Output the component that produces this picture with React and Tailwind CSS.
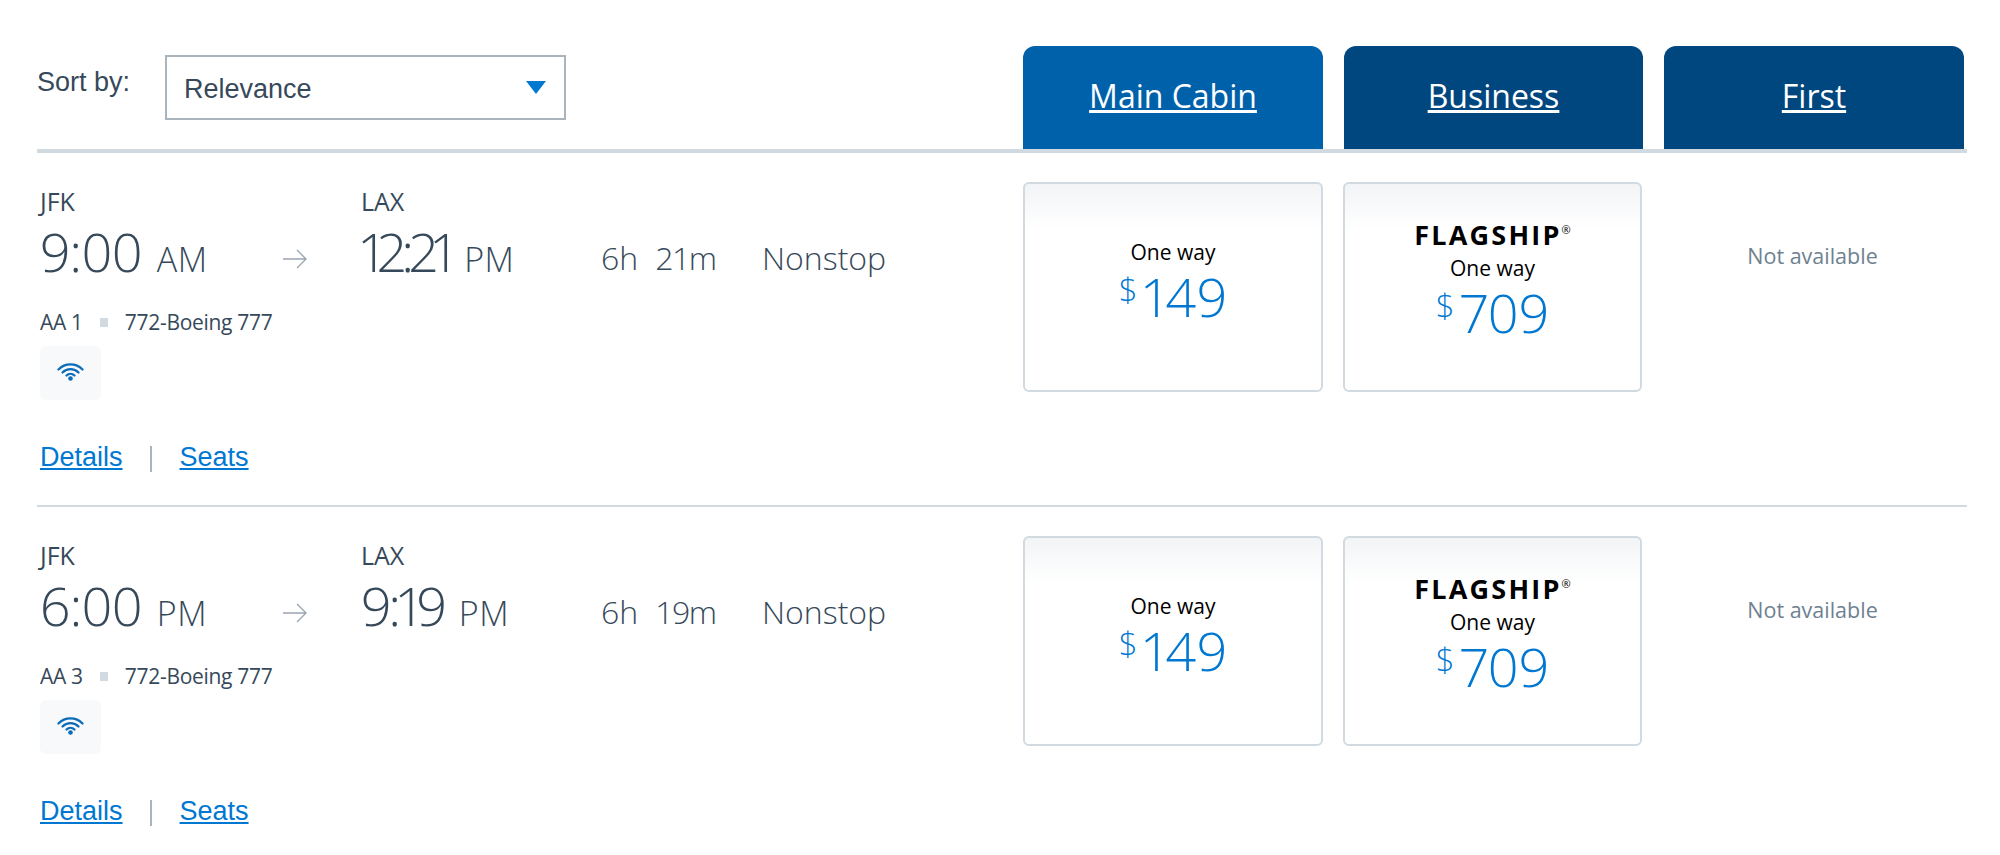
import React from 'react';

const flights = [
  { dep: '9:00', depAp: 'AM', arr: '12:21', arrAp: 'PM', arrTrack: 'tracking-[-5px]', h: '6h', m: '21m', no: 'AA 1' },
  { dep: '6:00', depAp: 'PM', arr: '9:19', arrAp: 'PM', arrTrack: 'tracking-[-3px]', h: '6h', m: '19m', no: 'AA 3' },
];

const sans = 'font-["Open_Sans",sans-serif]';
const arial = 'font-["Liberation_Sans",Arial,sans-serif]';

const Wifi = () => (
  <svg width="27" height="19" viewBox="0 0 27 19" fill="none" stroke="#0b6cb8" strokeWidth="2.3" strokeLinecap="round">
    <path d="M1.5 7.5C8 .7 19 .7 25.5 7.5" />
    <path d="M5.5 10.5C10 6 17 6 21.5 10.5" />
    <path d="M9.5 13.5C11.8 11.3 15.2 11.3 17.5 13.5" />
    <circle cx="13.5" cy="16.5" r="2.3" fill="#0b6cb8" stroke="none" />
  </svg>
);

const Time = ({ code, time, ap, track = 'tracking-[-1px]' }) => (
  <div>
    <div className="text-[25px] leading-[30px] text-[#36495a] -mt-[1px]">{code}</div>
    <div className="mt-[5px] h-[60px] flex items-baseline font-light text-[#36495a] leading-[60px]">
      <span className={`text-[54px] proportional-nums ${track}`}>{time}</span>
      <span className="text-[34px] ml-[15px] tracking-[0.5px]">{ap}</span>
    </div>
  </div>
);

const FareCard = ({ price, flagship, wide }) => (
  <div className={`h-[210px] border-2 border-[#d0dae0] rounded-md bg-gradient-to-b from-[#f2f4f6] to-white to-[22%] flex flex-col items-center ${wide ? 'w-[300px]' : 'w-[299px]'} ${flagship ? 'pt-[36px]' : 'pt-[53px]'}`}>
    {flagship && (
      <div className="h-[33px] flex items-start text-black font-bold text-[27px] leading-[30px] tracking-[2.2px]">
        FLAGSHIP<span className="text-[11px] leading-[20px] font-normal tracking-normal">®</span>
      </div>
    )}
    <div className="text-[21px] leading-[30px] text-black">One way</div>
    <div className="flex items-start text-[#0078d2] font-light mt-[2px]">
      <span className="text-[33px] leading-[42px] mr-[6px]">$</span>
      <span className="text-[54px] leading-[54px] proportional-nums">{price}</span>
    </div>
  </div>
);

const FlightRow = ({ f, last }) => (
  <div className={`flex h-[354px] ${last ? '' : 'border-b-2 border-[#d0dae0]'}`}>
    <div className="w-[986px] pl-[3px] pt-[34px]">
      <div className="flex items-start">
        <div className="w-[240px]"><Time code="JFK" time={f.dep} ap={f.depAp} /></div>
        <div className="w-[81px] pl-[2px] pt-[60px]">
          <svg width="26" height="24" viewBox="0 0 26 24" fill="none" stroke="#9aa7b1" strokeWidth="1.4">
            <path d="M1 12H24M15 3l9 9-9 9" />
          </svg>
        </div>
        <div className="w-[240px]"><Time code="LAX" time={f.arr} ap={f.arrAp} track={f.arrTrack} /></div>
        <div className="w-[161px] pt-[41px] text-[32px] leading-[60px] font-light text-[#36495a] flex">
          <span>{f.h}</span>
          <span className="ml-[17px] tracking-[-1.5px]">{f.m}</span>
        </div>
        <div className="pt-[41px] text-[32px] leading-[60px] font-light text-[#36495a]">Nonstop</div>
      </div>
      <div className="mt-[18px] flex items-center text-[21px] leading-[32px] tracking-[-0.3px] text-[#36495a]">
        <span>{f.no}</span>
        <span className="w-[8px] h-[9px] bg-[#d0dae0] mx-[17px]"></span>
        <span>772-Boeing 777</span>
      </div>
      <div className="mt-[8px] w-[61px] h-[54px] rounded-md bg-[#f7f9fa] flex justify-center pt-[16px]">
        <Wifi />
      </div>
      <div className={`mt-[41px] flex items-center text-[27px] leading-[32px] text-[#0078d2] ${arial}`}>
        <a className="underline" href="#details">Details</a>
        <span className="w-[2px] h-[26px] bg-[#a9b4bc] ml-[27px] mr-[28px] mt-[4px]"></span>
        <a className="underline" href="#seats">Seats</a>
      </div>
    </div>
    <div className="pt-[29px] flex gap-[20px] items-start">
      <FareCard price="149" wide />
      <FareCard price="709" flagship />
      <div className="w-[300px] pt-[59px] pl-[1px] text-center text-[21.5px] leading-[30px] text-[#6e8190]">Not available</div>
    </div>
  </div>
);

export default function App() {
  return (
    <div className={`w-[2000px] h-[855px] overflow-hidden bg-white pl-[37px] ${sans}`}>
      <div className="w-[1930px] h-[153px] border-b-4 border-[#d0dae0] flex">
        <div className={`w-[986px] flex items-start pt-[55px] ${arial}`}>
          <div className="w-[128px] text-[27px] leading-[54px] text-[#36495a]">Sort by:</div>
          <div className="w-[401px] h-[65px] border-2 border-[#a9b4bc] flex items-center justify-between pl-[17px] pr-[18px]">
            <span className="text-[27px] text-[#36495a] mt-[4px]">Relevance</span>
            <span className="w-0 h-0 border-x-[10px] border-x-transparent border-t-[13px] border-t-[#0078d2]"></span>
          </div>
        </div>
        <div className="flex gap-[21px] pt-[46px] h-[149px] text-[32px] text-white">
          <div className="w-[300px] h-[103px] rounded-t-xl bg-[#0061ab] text-center pt-[26px] leading-[48px]"><a className="underline" href="#main">Main Cabin</a></div>
          <div className="w-[299px] h-[103px] rounded-t-xl bg-[#00467f] text-center pt-[26px] leading-[48px]"><a className="underline" href="#business">Business</a></div>
          <div className="w-[300px] h-[103px] rounded-t-xl bg-[#00467f] text-center pt-[26px] leading-[48px]"><a className="underline" href="#first">First</a></div>
        </div>
      </div>
      <div className="w-[1930px]">
        {flights.map((f, i) => (
          <FlightRow key={f.no} f={f} last={i === flights.length - 1} />
        ))}
      </div>
    </div>
  );
}
